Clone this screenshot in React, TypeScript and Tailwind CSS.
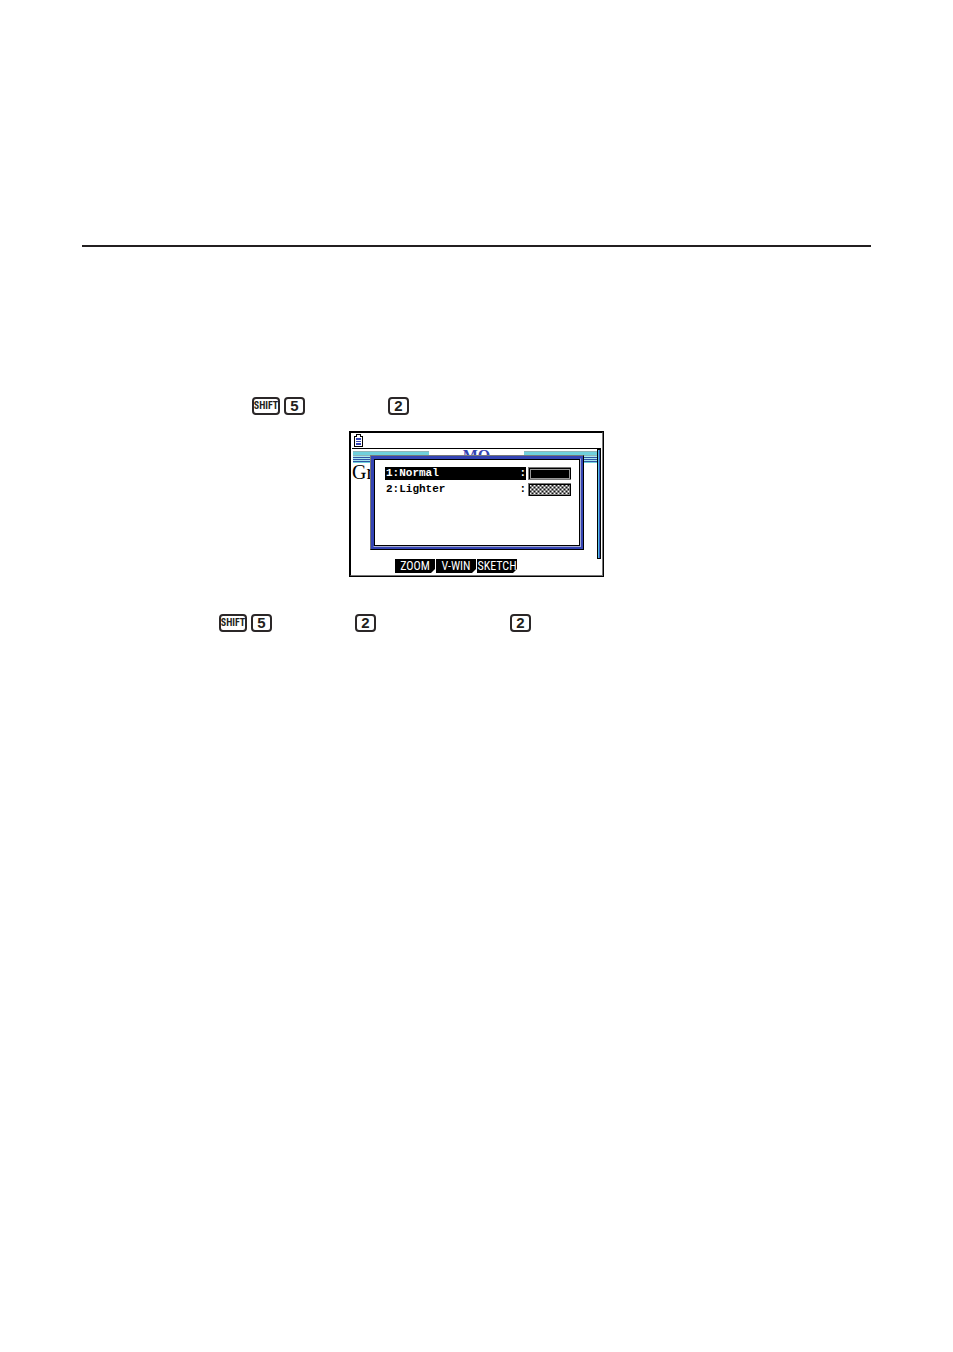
import type { ReactNode } from "react";

function Key({ children, wide = false }: { children: ReactNode; wide?: boolean }) {
  return (
    <kbd
      className={
        "flex h-[18px] items-center justify-center rounded-[4px] border-2 border-[#2b2728] text-[#231f20] " +
        (wide
          ? "w-7 font-['Liberation_Sans_Narrow','Roboto_Condensed','Liberation_Sans',sans-serif] text-[10px] font-bold leading-[14px]"
          : "w-[21px] pb-px font-['Liberation_Sans',sans-serif] text-[15px] font-bold leading-[12px]")
      }
    >
      {children}
    </kbd>
  );
}

function Battery() {
  return (
    <svg width="9" height="13" viewBox="0 0 9 13" shapeRendering="crispEdges" aria-hidden="true">
      <path d="M2 0h5v2h2v11H0V2h2z" fill="#000" />
      <path d="M3 1h3v2h2v9H1V3h2z" fill="#fff" />
      <path d="M2 4h5v2H2zM2 7h5v1H2zM2 9h5v2H2z" fill="#3444b4" />
    </svg>
  );
}

function Stripes({ className }: { className: string }) {
  return (
    <svg className={className} height="12" preserveAspectRatio="none" viewBox="0 0 20 12" shapeRendering="crispEdges" aria-hidden="true">
      <path d="M0 0h20v12H0z" fill="#6fd0dc" />
      <path d="M0 0h20v1H0zM0 4h20v1H0z" fill="#8fb4b8" />
      <path d="M0 6h20v1H0zM0 8h20v1H0zM0 10h20v1H0z" fill="#2f55a4" />
      <path d="M0 5h20v1H0zM0 7h20v1H0zM0 9h20v1H0z" fill="#a8e6ee" />
    </svg>
  );
}

function LighterSwatch() {
  return (
    <svg width="43" height="13" viewBox="0 0 43 13" shapeRendering="crispEdges" aria-hidden="true">
      <defs>
        <pattern id="dots" width="4" height="4" patternUnits="userSpaceOnUse">
          <path d="M0 0h4v4H0z" fill="#858585" />
          <path d="M0 0h1v1H0zM2 2h1v1H2z" fill="#fff" />
          <path d="M2 0h1v1H2zM0 2h1v1H0z" fill="#111" />
        </pattern>
      </defs>
      <path d="M0 0h43v13H0z" fill="#777" />
      <path d="M1 1h42v12H1z" fill="#000" />
      <path d="M2 2h40v10H2z" fill="url(#dots)" />
    </svg>
  );
}

function NormalSwatch() {
  return (
    <svg width="43" height="13" viewBox="0 0 43 13" shapeRendering="crispEdges" aria-hidden="true">
      <path d="M0 0h43v13H0z" fill="#777" />
      <path d="M1 1h42v11H1z" fill="#000" />
      <path d="M2 2h40v10H2z" fill="#999" />
      <path d="M3 3h38v8H3z" fill="#000" />
    </svg>
  );
}

function Option({ label, selected = false, swatch }: { label: string; selected?: boolean; swatch: ReactNode }) {
  return (
    <button className="flex h-[13px] w-full items-center gap-[2px]">
      <span
        className={
          "flex h-[13px] flex-1 items-center justify-between pl-px font-['Liberation_Mono',monospace] text-[11px] font-bold leading-[13px] " +
          (selected ? "bg-black text-white" : "text-black")
        }
      >
        <span>{label}</span>
        <span>:</span>
      </span>
      {swatch}
    </button>
  );
}

function SoftKey({ children }: { children: ReactNode }) {
  return (
    <button className="flex h-[14px] w-10 items-center justify-center bg-black font-['Liberation_Sans_Narrow','Roboto_Condensed','Liberation_Sans',sans-serif] text-[12px] leading-[14px] text-white [clip-path:polygon(0_0,100%_0,100%_72%,90%_100%,0_100%)]">
      {children}
    </button>
  );
}

function CalculatorScreen() {
  return (
    <section className="w-[255px] border border-black">
      <div className="relative flex h-36 flex-col border border-t-black border-r-[#777] border-b-[#777] border-l-black bg-white">
        <div className="mx-px flex h-4 items-start border-b border-black pt-px pl-[2px]">
          <Battery />
        </div>
        <div className="mt-[2px] ml-[2px] flex h-3 w-[244px] justify-between">
          <Stripes className="w-[76px]" />
          <span className="font-['Liberation_Serif',serif] text-[16px] font-bold leading-[10px] text-[#3444b4]">MO</span>
          <Stripes className="w-[73px]" />
        </div>
        <p className="pl-px font-['Liberation_Serif',serif] text-[20px] leading-[18px] text-black">Gr</p>
        <nav className="mt-auto mb-[2px] flex gap-px pl-11">
          <SoftKey>ZOOM</SoftKey>
          <SoftKey>V-WIN</SoftKey>
          <SoftKey>SKETCH</SoftKey>
        </nav>
        <div className="absolute top-4 right-px h-[110px] w-1 border border-black bg-linear-to-r from-[#55bfe0] from-50% to-[#2c52c0] to-50%" />
        <div className="absolute top-[22px] left-[19px] h-[95px] w-[214px] border border-t-[#777] border-r-black border-b-black border-l-[#777] bg-[#3444b4]">
          <div className="m-[2px] flex h-[89px] flex-col gap-[3px] border border-t-[#3444b4] border-l-[#3444b4] border-r-[#a7acd0] border-b-[#a7acd0] bg-white pt-[8px] pr-[9px] pl-[11px] outline-1 -outline-offset-2 outline-black">
            <Option label="1:Normal" selected swatch={<NormalSwatch />} />
            <Option label="2:Lighter" swatch={<LighterSwatch />} />
          </div>
        </div>
      </div>
    </section>
  );
}

export default function App() {
  return (
    <main className="min-h-screen bg-white px-[82px] pt-[245px]">
      <hr className="border-0 border-t-2 border-[#231f20]" />
      <div className="mt-[150px] flex pl-[170px]">
        <Key wide>SHIFT</Key>
        <div className="ml-1 flex gap-[83px]">
          <Key>5</Key>
          <Key>2</Key>
        </div>
      </div>
      <div className="mt-4 pl-[267px]">
        <CalculatorScreen />
      </div>
      <div className="mt-[37px] flex pl-[137px]">
        <Key wide>SHIFT</Key>
        <div className="ml-1 flex gap-[83px]">
          <Key>5</Key>
          <Key>2</Key>
        </div>
        <div className="ml-[134px]">
          <Key>2</Key>
        </div>
      </div>
    </main>
  );
}
